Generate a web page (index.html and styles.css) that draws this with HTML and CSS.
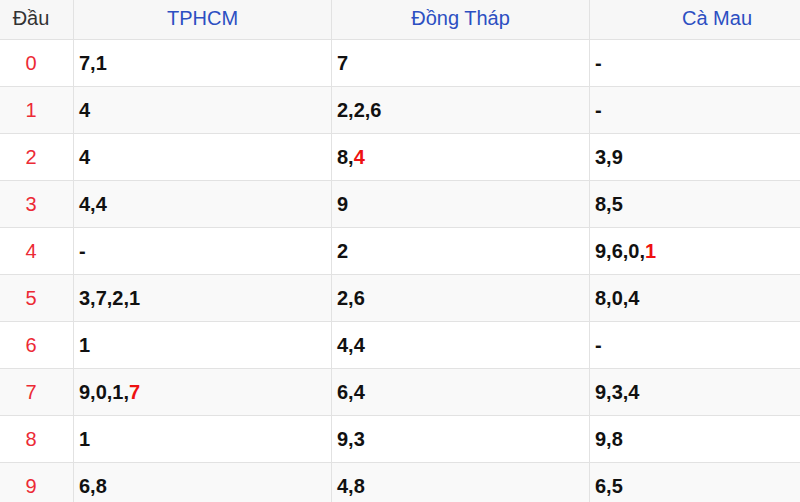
FILE: index.html
```html
<!DOCTYPE html>
<html lang="vi">
<head>
<meta charset="utf-8">
<link rel="stylesheet" href="styles.css">
</head>
<body>
<table class="loto">
  <thead>
    <tr><th class="dau">Đầu</th><th>TPHCM</th><th>Đồng Tháp</th><th class="last">Cà Mau</th></tr>
  </thead>
  <tbody>
    <tr><td class="head">0</td><td>7,1</td><td>7</td><td>-</td></tr>
    <tr><td class="head">1</td><td>4</td><td>2,2,6</td><td>-</td></tr>
    <tr><td class="head">2</td><td>4</td><td>8,<span class="hl">4</span></td><td>3,9</td></tr>
    <tr><td class="head">3</td><td>4,4</td><td>9</td><td>8,5</td></tr>
    <tr><td class="head">4</td><td>-</td><td>2</td><td>9,6,0,<span class="hl">1</span></td></tr>
    <tr><td class="head">5</td><td>3,7,2,1</td><td>2,6</td><td>8,0,4</td></tr>
    <tr><td class="head">6</td><td>1</td><td>4,4</td><td>-</td></tr>
    <tr><td class="head">7</td><td>9,0,1,<span class="hl">7</span></td><td>6,4</td><td>9,3,4</td></tr>
    <tr><td class="head">8</td><td>1</td><td>9,3</td><td>9,8</td></tr>
    <tr><td class="head">9</td><td>6,8</td><td>4,8</td><td>6,5</td></tr>
  </tbody>
</table>
</body>
</html>
```
FILE: styles.css
```css
html, body {
  margin: 0;
  padding: 0;
  overflow: hidden;
  background: #fff;
}
body {
  width: 800px;
  height: 502px;
  font-family: "Liberation Sans", Arial, sans-serif;
}
.loto {
  border-collapse: collapse;
  table-layout: fixed;
  width: 800px;
  font-size: 20px;
}
.loto th, .loto td {
  border: 1px solid #e2e2e2;
  padding: 0 5px;
}
.loto th {
  height: 37px;
  background: #f7f7f7;
  font-weight: normal;
  color: #2c4fc2;
  text-align: center;
  border-top: none;
}
.loto th.dau {
  color: #333;
  width: 62px;
  padding: 0 11px 2px 0;
}
.loto th:nth-child(2), .loto th:nth-child(3) {
  width: 247px;
  padding-bottom: 2px;
}
.loto th.last {
  padding: 0 0 2px 44px;
  border-right: none;
}
.loto th:first-child, .loto td:first-child {
  border-left: none;
}
.loto td:last-child {
  border-right: none;
}
.loto td {
  height: 46px;
  font-weight: bold;
  color: #111;
  text-align: left;
}
.loto td.head {
  text-align: center;
  font-weight: normal;
  color: #ec2a35;
  padding: 0 11px 0 0;
}
.loto tbody tr:nth-child(even) td {
  background: #f9f9f9;
}
.hl {
  color: #ee1111;
}
```
